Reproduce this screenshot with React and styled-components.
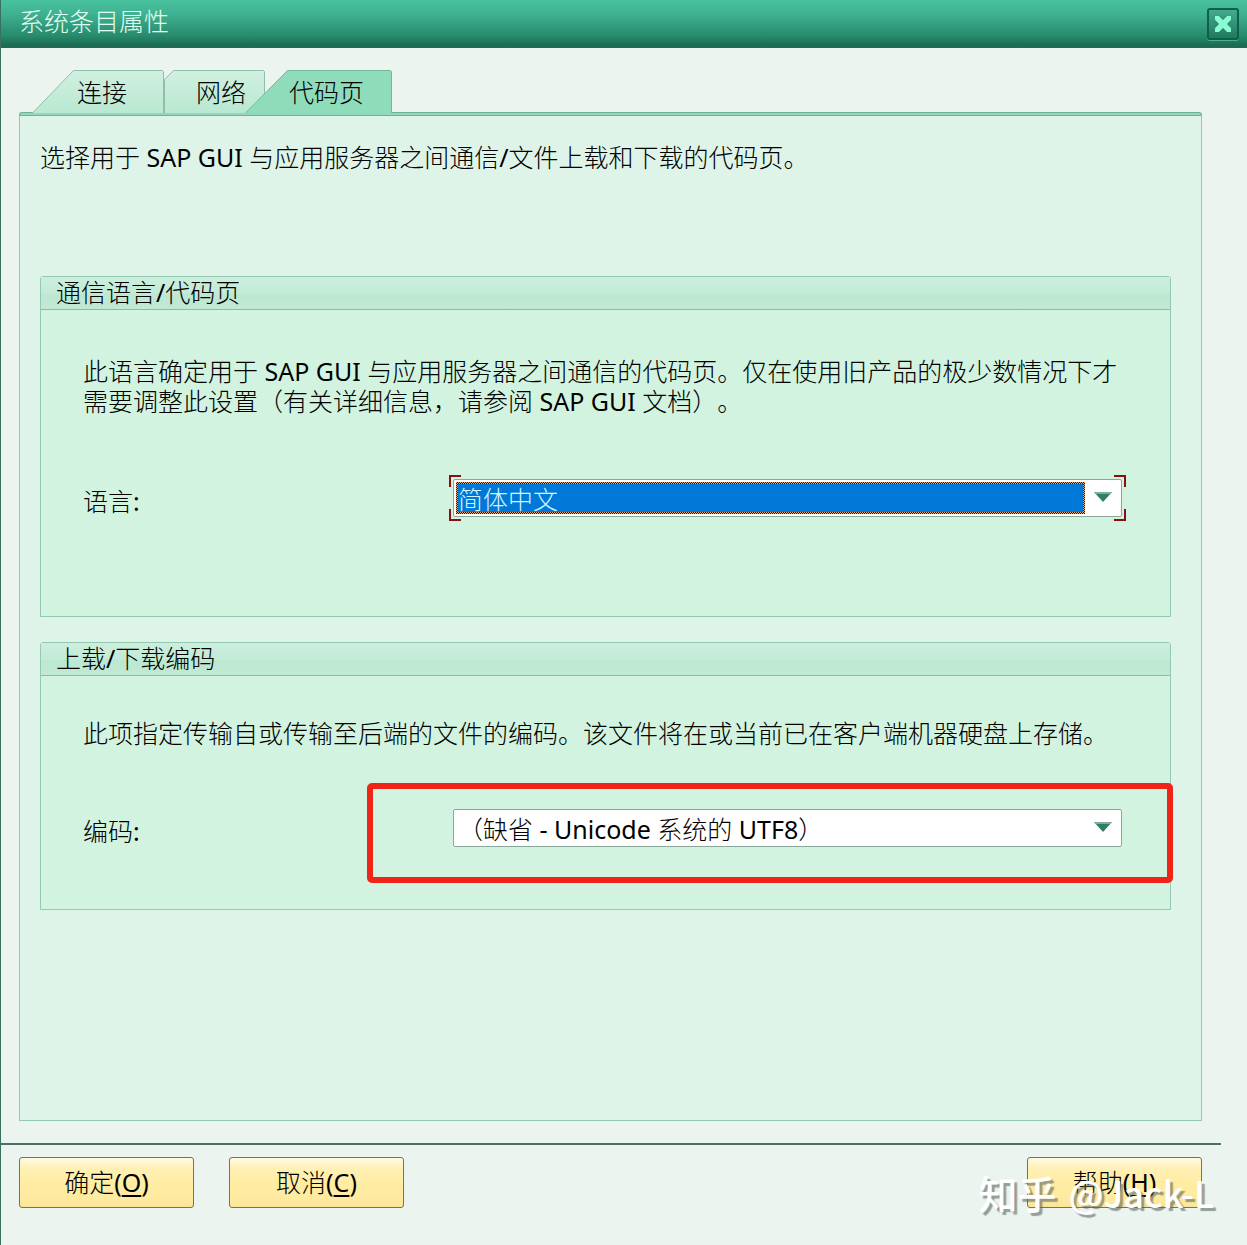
import React, { useState } from 'react';
import styled, { createGlobalStyle, css } from 'styled-components';

const GlobalStyle = createGlobalStyle`
  *,
  *::before,
  *::after {
    box-sizing: border-box;
  }

  body {
    margin: 0;
    background: #ebf4ef;
  }

  body,
  button,
  select {
    font-family: "Noto Sans", "Noto Sans CJK SC Light", "Noto Sans CJK SC", sans-serif;
    font-size: 25px;
    font-weight: 400;
    line-height: 30px;
    color: #000;
    text-spacing-trim: space-all;
  }
`;

const Dialog = styled.div`
  position: relative;
  display: flex;
  flex-direction: column;
  min-height: 100vh;
  border-left: 1px solid #3a7060;
`;

const TitleBar = styled.header`
  display: flex;
  align-items: center;
  justify-content: space-between;
  height: 48px;
  padding: 0 8px 0 18px;
  background: linear-gradient(#48c29e 0%, #3fb190 30%, #278a6c 75%, #1b6a52 95%, #2a6a54 100%);
`;

const Title = styled.h1`
  margin: 0 0 6px;
  font-size: 25px;
  font-weight: 400;
  color: #e2fff4;
`;

const CloseButton = styled.button`
  display: flex;
  align-items: center;
  justify-content: center;
  width: 32px;
  height: 32px;
  padding: 0;
  border: 2px solid #0e6048;
  border-radius: 3px;
  background: linear-gradient(#43ab8b, #1f7a5e);
  box-shadow: 0 1px 0 #4fae90;
`;

const Body = styled.main`
  display: flex;
  flex-direction: column;
  flex: 1;
  padding: 22px 45px 23px 18px;
`;

const TabList = styled.div`
  display: flex;
  height: 42px;
  padding-left: 13px;
`;

const Tab = styled.button`
  position: relative;
  width: ${({ $width }) => $width}px;
  height: 43px;
  margin-left: ${({ $overlap }) => ($overlap ? -20 : 0)}px;
  padding: 1px 0 0 ${({ $indent }) => $indent}px;
  border: 0;
  background: none;
  text-align: left;
  white-space: nowrap;
`;

const TabShape = styled.svg`
  position: absolute;
  inset: 0;
`;

const TabText = styled.span`
  position: relative;
`;

const Panel = styled.section`
  flex: 1;
  border: 1px solid #93c9b0;
  border-top: 0;
  border-radius: 3px 3px 0 0;
  background: #dff4e8;
`;

const PanelEdge = styled.div`
  height: 4px;
  margin: 0 -1px;
  border: 1px solid #6db394;
  border-radius: 3px 3px 0 0;
  background: #93d9b9;
`;

const PanelContent = styled.div`
  display: flex;
  flex-direction: column;
  gap: 25px;
  padding: 26px 30px 26px 20px;
`;

const Text = styled.p`
  margin: 0;
`;

const Intro = styled(Text)`
  margin-bottom: 79px;
`;

const Group = styled.section`
  position: relative;
  border: 1px solid #93c9b0;
  border-radius: 3px 3px 0 0;
  background: #d3f3e1;
`;

const GroupTitle = styled.h2`
  height: 33px;
  margin: 0;
  padding: 0 15px;
  border-bottom: 1px solid #87bfa5;
  background: linear-gradient(#ccefdd 0%, #c3ebd7 50%, #bce7d1 55%, #c1ead5 100%);
  font-size: 25px;
  font-weight: 400;
`;

const GroupContent = styled.div`
  padding: ${({ $pad }) => $pad};
`;

const Field = styled.div`
  display: grid;
  grid-template-columns: 370px 1fr;
  margin-top: ${({ $space }) => $space}px;
`;

const FieldLabel = styled.label`
  padding-top: 7px;
`;

const focusCorners = css`
  &::before {
    content: '';
    position: absolute;
    inset: -5px;
    pointer-events: none;
    background:
      linear-gradient(#8b0f12 0 0) 0 0 / 12px 2px,
      linear-gradient(#8b0f12 0 0) 0 0 / 2px 12px,
      linear-gradient(#8b0f12 0 0) 100% 0 / 12px 2px,
      linear-gradient(#8b0f12 0 0) 100% 0 / 2px 12px,
      linear-gradient(#8b0f12 0 0) 0 100% / 12px 2px,
      linear-gradient(#8b0f12 0 0) 0 100% / 2px 12px,
      linear-gradient(#8b0f12 0 0) 100% 100% / 12px 2px,
      linear-gradient(#8b0f12 0 0) 100% 100% / 2px 12px;
    background-repeat: no-repeat;
  }
`;

const SelectBox = styled.div`
  position: relative;
  display: flex;
  align-items: center;
  height: 38px;
  padding: 2px 9px 2px 2px;
  border: 1px solid #8aa899;
  border-radius: 2px;
  background: #fff;
  ${({ $focused }) => $focused && focusCorners}
`;

const Select = styled.select`
  flex: 1;
  min-width: 0;
  height: 32px;
  margin-right: 9px;
  padding: 0;
  border: 2px solid transparent;
  border-radius: 0;
  outline: 0;
  appearance: none;
  background: transparent;

  ${({ $focused }) =>
    $focused &&
    css`
      background:
        linear-gradient(#0078d7 0 0) padding-box,
        repeating-conic-gradient(#241c18 0 25%, #e0a878 0 50%) 0 0 / 2px 2px border-box;
      color: #d4f4ff;
    `}
`;

const Marker = styled.div`
  position: absolute;
  top: 140px;
  right: -3px;
  left: 326px;
  height: 100px;
  border: 6px solid #f02418;
  border-radius: 5px;
  pointer-events: none;
`;

const Footer = styled.footer`
  position: relative;
  display: flex;
  gap: 35px;
  padding: 13px 45px 37px 18px;

  &::before {
    content: '';
    position: absolute;
    top: -1px;
    right: 26px;
    left: 0;
    height: 2px;
    background: #4a7068;
  }
`;

const Button = styled.button`
  width: 175px;
  height: 51px;
  padding: 0 0 2px;
  border: 1px solid #7c7347;
  border-radius: 3px;
  background: linear-gradient(#fffbe4 0%, #fff0b4 22%, #ffeda4 50%, #ffeba0 80%, #fbe598 100%);

  &:last-of-type {
    margin-left: auto;
  }
`;

const AccessKey = styled.u`
  text-decoration-thickness: 2px;
  text-underline-offset: 3px;
`;

const Watermark = styled.div`
  position: absolute;
  right: 33px;
  bottom: 31px;
  display: flex;
  gap: 12px;
  font-family: "Noto Sans CJK SC", sans-serif;
  font-size: 39px;
  font-weight: 500;
  line-height: 44px;
  color: #fff;
  text-shadow: 3px 3px 1px rgba(90, 100, 95, 0.6);
  pointer-events: none;
`;

const Handle = styled.span`
  font-size: 36px;
`;

const TABS = [
  { id: 'connection', label: '连接', width: 132, indent: 45, points: '0.5,43 41.5,0.5 130.5,0.5 131.5,1.5 131.5,43' },
  { id: 'network', label: '网络', width: 101, indent: 32, points: '0.5,43 0.5,9.5 9.5,0.5 99.5,0.5 100.5,1.5 100.5,43' },
  { id: 'codepage', label: '代码页', width: 147, indent: 44, overlap: true, points: '0.5,43 42.5,0.5 145.5,0.5 146.5,1.5 146.5,43' },
];

const CloseIcon = () => (
  <svg width="18" height="18" viewBox="0 0 18 18" aria-hidden="true">
    <path d="M1 1h5l3 3 3-3h5v5l-3 3 3 3v5h-5l-3-3-3 3H1v-5l3-3-3-3z" fill="#1f7a5e" />
    <path d="M1 1h4l4 4 4-4h4v4l-4 4 4 4v4h-4l-4-4-4 4H1v-4l4-4-4-4z" fill="#8bfbd6" />
  </svg>
);

const Arrow = () => (
  <svg width="18" height="12" viewBox="0 0 18 12" aria-hidden="true">
    <path d="M0 0h18L9 10z" fill="#2f7f63" />
    <path d="M0 0h18l-2 2H2z" fill="#7fae9b" />
  </svg>
);

const DropDown = ({ id, options, focused }) => (
  <SelectBox $focused={focused}>
    <Select id={id} $focused={focused}>
      {options.map((option) => (
        <option key={option}>{option}</option>
      ))}
    </Select>
    <Arrow />
  </SelectBox>
);

const ActionButton = ({ label, accessKey }) => (
  <Button type="button">
    {label}(<AccessKey>{accessKey}</AccessKey>)
  </Button>
);

const App = () => {
  const [active, setActive] = useState('codepage');

  return (
    <Dialog>
      <GlobalStyle />
      <TitleBar>
        <Title>系统条目属性</Title>
        <CloseButton type="button" aria-label="关闭">
          <CloseIcon />
        </CloseButton>
      </TitleBar>
      <Body>
        <TabList role="tablist">
          {TABS.map(({ id, label, width, indent, overlap, points }) => (
            <Tab
              key={id}
              type="button"
              role="tab"
              aria-selected={id === active}
              onClick={() => setActive(id)}
              $width={width}
              $indent={indent}
              $overlap={overlap}
            >
              <TabShape width={width} height="43" aria-hidden="true">
                <defs>
                  <linearGradient id={`fill-${id}`} x1="0" y1="0" x2="0" y2="1">
                    <stop offset="0" stopColor={id === active ? '#8fdcbb' : '#d0f0e0'} />
                    <stop offset="1" stopColor={id === active ? '#8fdcbb' : '#b9e8d1'} />
                  </linearGradient>
                </defs>
                <polyline
                  points={points}
                  fill={`url(#fill-${id})`}
                  stroke={id === active ? '#72b899' : '#8fbfa9'}
                />
              </TabShape>
              <TabText>{label}</TabText>
            </Tab>
          ))}
        </TabList>
        <Panel role="tabpanel">
          <PanelEdge />
          <PanelContent>
            <Intro>选择用于 SAP GUI 与应用服务器之间通信/文件上载和下载的代码页。</Intro>
            <Group>
              <GroupTitle>通信语言/代码页</GroupTitle>
              <GroupContent $pad="46px 48px 99px 42px">
                <Text>
                  此语言确定用于 SAP GUI 与应用服务器之间通信的代码页。仅在使用旧产品的极少数情况下才需要调整此设置（有关详细信息，请参阅 SAP GUI 文档）。
                </Text>
                <Field $space={63}>
                  <FieldLabel htmlFor="language">语言:</FieldLabel>
                  <DropDown id="language" options={['简体中文']} focused />
                </Field>
              </GroupContent>
            </Group>
            <Group>
              <GroupTitle>上载/下载编码</GroupTitle>
              <GroupContent $pad="42px 48px 62px 42px">
                <Text>此项指定传输自或传输至后端的文件的编码。该文件将在或当前已在客户端机器硬盘上存储。</Text>
                <Field $space={61}>
                  <FieldLabel htmlFor="encoding">编码:</FieldLabel>
                  <DropDown id="encoding" options={['（缺省 - Unicode 系统的 UTF8）']} />
                </Field>
              </GroupContent>
              <Marker />
            </Group>
          </PanelContent>
        </Panel>
      </Body>
      <Footer>
        <ActionButton label="确定" accessKey="O" />
        <ActionButton label="取消" accessKey="C" />
        <ActionButton label="帮助" accessKey="H" />
      </Footer>
      <Watermark>
        <span>知乎</span>
        <Handle>@Jack-L</Handle>
      </Watermark>
    </Dialog>
  );
};

export default App;
